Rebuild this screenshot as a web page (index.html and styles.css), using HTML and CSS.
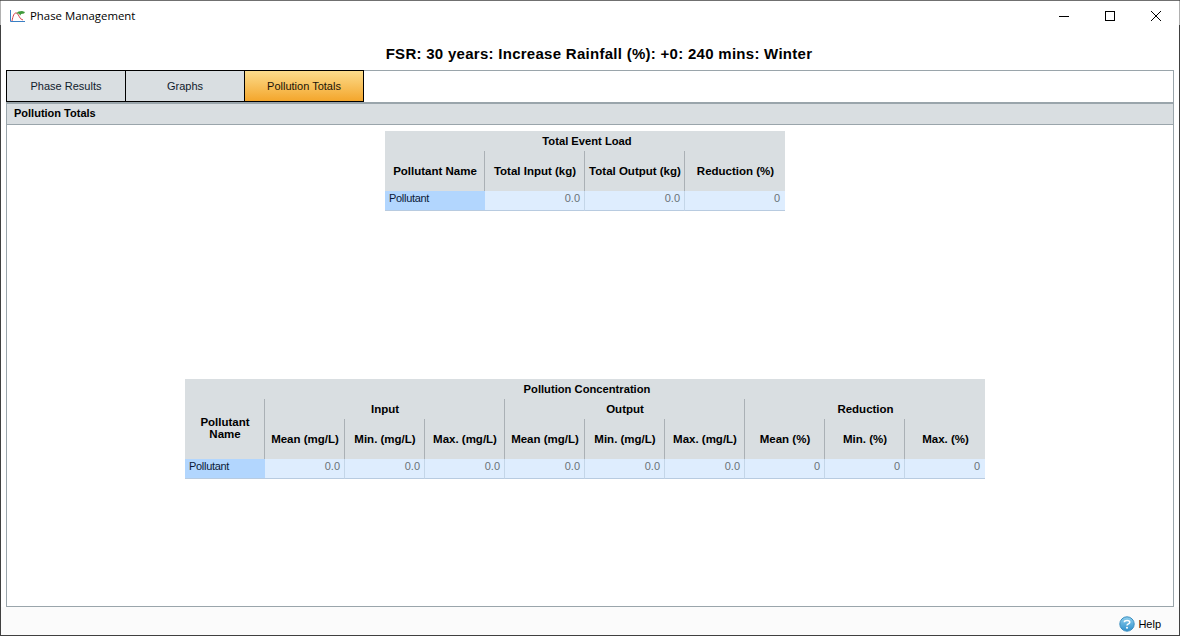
FILE: index.html
```html
<!DOCTYPE html>
<html lang="en">
<head>
<meta charset="utf-8">
<title>Phase Management</title>
<link rel="stylesheet" href="styles.css">
</head>
<body>
<div class="window">
  <header class="titlebar">
    <svg class="app-icon" width="16" height="16" viewBox="0 0 16 16">
      <path d="M1.500 2v11.500H16" fill="none" stroke="#3a7fc4" stroke-width="1"/>
      <path d="M3 13C4 8 5 4.500 7.500 5S10 11.500 14 12" fill="none" stroke="#d8404a" stroke-width="1"/>
      <path d="M7 5.500L9.500 3.500 13 3 16 4 15 5.500 12 6 11.500 7.500 9.500 5.500z" fill="#3f9a3a"/>
    </svg>
    <span class="window-title">Phase Management</span>
    <div class="window-controls">
      <svg width="12" height="12" viewBox="0 0 12 12"><path d="M1 6.500h10" stroke="#000" fill="none"/></svg>
      <svg width="12" height="12" viewBox="0 0 12 12"><rect x="1.500" y="1.500" width="9" height="9" stroke="#000" fill="none"/></svg>
      <svg width="12" height="12" viewBox="0 0 12 12"><path d="M1 1l10 10M11 1L1 11" stroke="#000" fill="none"/></svg>
    </div>
  </header>
  <h1 class="heading">FSR: 30 years: Increase Rainfall (%): +0: 240 mins: Winter</h1>
  <main class="panel">
    <nav class="tabs">
      <div class="tab">Phase Results</div>
      <div class="tab">Graphs</div>
      <div class="tab tab-active">Pollution Totals</div>
    </nav>
    <div class="section-title">Pollution Totals</div>
    <div class="section-body">
      <table class="grid grid-load">
        <thead>
          <tr><th colspan="4" class="row-20 plain caption-cell">Total Event Load</th></tr>
          <tr class="row-40">
            <th>Pollutant Name</th>
            <th>Total Input (kg)</th>
            <th>Total Output (kg)</th>
            <th class="plain">Reduction (%)</th>
          </tr>
        </thead>
        <tbody>
          <tr><td class="name">Pollutant</td><td>0.0</td><td>0.0</td><td class="last">0</td></tr>
        </tbody>
      </table>
      <table class="grid grid-conc">
        <thead>
          <tr><th colspan="10" class="row-20 plain caption-cell">Pollution Concentration</th></tr>
          <tr class="row-20">
            <th rowspan="2" class="name-head">Pollutant<br>Name</th>
            <th colspan="3">Input</th>
            <th colspan="3">Output</th>
            <th colspan="3" class="plain">Reduction</th>
          </tr>
          <tr class="row-40">
            <th>Mean (mg/L)</th><th>Min. (mg/L)</th><th>Max. (mg/L)</th>
            <th>Mean (mg/L)</th><th>Min. (mg/L)</th><th>Max. (mg/L)</th>
            <th>Mean (%)</th><th>Min. (%)</th><th class="plain">Max. (%)</th>
          </tr>
        </thead>
        <tbody>
          <tr>
            <td class="name">Pollutant</td>
            <td>0.0</td><td>0.0</td><td>0.0</td>
            <td>0.0</td><td>0.0</td><td>0.0</td>
            <td>0</td><td>0</td><td class="last">0</td>
          </tr>
        </tbody>
      </table>
    </div>
  </main>
  <footer class="footer">
    <svg width="16" height="16" viewBox="0 0 16 16">
      <defs><linearGradient id="help" x1="0" y1="0" x2="0" y2="1"><stop offset="0" stop-color="#8fd0ee"/><stop offset="1" stop-color="#2f8fcc"/></linearGradient></defs>
      <circle cx="8" cy="8" r="7.200" fill="url(#help)" stroke="#3d8fc0"/>
      <path d="M5.300 6.200C5.500 4 10.800 4 10.800 6.300c0 1.700-2.800 1.500-2.800 3.200" fill="none" stroke="#fff" stroke-width="1.500"/>
      <circle cx="8" cy="11.700" r="1" fill="#fff"/>
    </svg>
    <span class="help">Help</span>
  </footer>
</div>
</body>
</html>
```
FILE: styles.css
```css
* { box-sizing: border-box; }
html, body { margin: 0; height: 100%; }
body { background: #fff; font-family: "Liberation Sans", Arial, sans-serif; font-size: 11px; color: #000; overflow: hidden; }
.window {
  width: 1180px; height: 636px; display: flex; flex-direction: column;
  background: #fff; border-top: 1px solid #707070; border-left: 1px solid #404040; border-right: 1px solid #404040; border-bottom: 1px solid #404040;
}
.titlebar {
  height: 29px; flex: none; display: flex; align-items: center; padding-left: 8px; margin: 0 -1px;
  border-style: solid; border-width: 0 1px;
  border-image: linear-gradient(#b0b0b0 80%, #404040 80%) 1;
}
.app-icon { flex: none; }
.window-title { margin-left: 5px; font-family: "Open Sans", sans-serif; font-size: 11.4px; }
.window-controls { margin-left: auto; margin-right: 17px; display: flex; gap: 34px; }
.window-controls svg { display: block; }
.heading { margin: 0; height: 40px; flex: none; padding: 15px 0 0 18px; text-align: center; font-size: 15px; line-height: 18px; font-weight: bold; letter-spacing: 0.28px; }
.panel { flex: 1; margin: 0 5px; display: flex; flex-direction: column; border: 1px solid #9aa5ab; }
.tabs { display: flex; height: 31px; flex: none; }
.tab { width: 120px; margin-top: -1px; margin-left: -1px; height: 32px; display: flex; align-items: center; justify-content: center; background: #d9dee1; border: 1px solid #000; color: #10202c; }
.tab + .tab { margin-left: -1px; width: 120px; }
.tab-active { background: linear-gradient(#fcdc8c, #f4a62c); color: #1a1408; }
.section-title { height: 23px; flex: none; background: #d9dee1; border-top: 2px solid #9aa5ab; border-bottom: 1px solid #9aa5ab; padding-left: 7px; line-height: 18px; font-weight: bold; }
.section-body { flex: 1; display: flex; flex-direction: column; align-items: center; padding: 6px 10px 0 0; gap: 168px; }
.grid { border-collapse: separate; border-spacing: 0; table-layout: fixed; }
.grid-load { width: 400px; }
.grid-conc { width: 800px; }
.grid th { background: #d9dee1; font-size: 11.5px; font-weight: bold; padding: 0 0 0 1px; text-align: center; border-right: 1px solid #aab0b5; line-height: 12px; }
.grid th.plain { border-right: 0; }
.grid th.caption-cell { font-size: 11.2px; padding-left: 4px; }
.grid th.name-head { padding-bottom: 2px; }
.grid th, .grid td { width: 80px; }
.grid-load th, .grid-load td { width: 100px; }
.row-20, .row-20 th { height: 20px; }
.row-40, .row-40 th { height: 40px; }
.grid td { height: 20px; padding: 0 4px 5px 0; background: #deedfe; border-right: 1px solid #c4d6e8; border-bottom: 1px solid #b8cbe0; text-align: right; color: #6a7278; line-height: 12px; }
.grid td.last { border-right: 0; padding-right: 5px; }
.grid td.name { background: #b2d6fe; border-right: 0; text-align: left; padding-left: 4px; color: #0a1a38; letter-spacing: -0.3px; }
.footer { height: 28px; flex: none; display: flex; align-items: center; justify-content: flex-end; gap: 3px; padding: 5px 18px 0 0; background: #fbfbfb; }
.help { color: #000; }
```
